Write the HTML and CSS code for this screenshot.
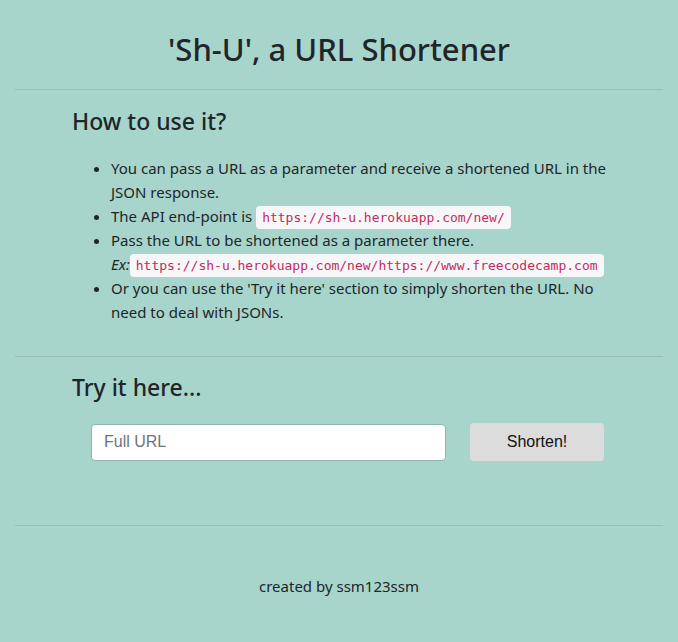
FILE: index.html
```html
<!DOCTYPE html>
<html lang="en">
<head>
<meta charset="utf-8">
<title>Sh-U</title>
<link rel="stylesheet" href="styles.css">
</head>
<body>
<div class="page">
  <header class="header">
    <h1 class="title">'Sh-U', a URL Shortener</h1>
  </header>
  <hr class="rule">
  <section class="section how">
    <h3 class="heading">How to use it?</h3>
    <ul class="steps">
      <li>You can pass a URL as a parameter and receive a shortened URL in the JSON response.</li>
      <li>The API end-point is <code class="code">https://sh-u.herokuapp.com/new/</code></li>
      <li>Pass the URL to be shortened as a parameter there.<br><em>Ex:</em><code class="code">https://sh-u.herokuapp.com/new/https://www.freecodecamp.com</code></li>
      <li>Or you can use the 'Try it here' section to simply shorten the URL. No need to deal with JSONs.</li>
    </ul>
  </section>
  <hr class="rule">
  <section class="section try">
    <h3 class="heading">Try it here...</h3>
    <form class="form">
      <input class="url-input" type="text" placeholder="Full URL">
      <button class="btn" type="button">Shorten!</button>
    </form>
  </section>
  <hr class="rule">
  <footer class="footer">created by ssm123ssm</footer>
</div>
</body>
</html>
```
FILE: styles.css
```css
html, body {
  margin: 0;
  padding: 0;
}
body {
  background: #a7d5cc;
  color: #212529;
  font-family: "Noto Sans", sans-serif;
  font-size: 15px;
  line-height: 24px;
}
.page {
  padding: 0 15px;
}
.header {
  padding-top: 30px;
  padding-bottom: 21px;
  text-align: center;
}
.title {
  margin: 0;
  font-size: 31px;
  font-weight: 500;
  line-height: 38px;
}
.rule {
  margin: 0;
  border: 0;
  border-top: 1px solid rgba(0, 0, 0, 0.1);
}
.section {
  padding: 0 42px 0 57px;
}
.how {
  padding-top: 17px;
  padding-bottom: 32px;
}
.heading {
  margin: 0;
  font-size: 23px;
  font-weight: 500;
  line-height: 29px;
}
.steps {
  margin: 20px 0 0 0;
  padding-left: 39px;
}
.code {
  font-family: "DejaVu Sans Mono", monospace;
  font-size: 13px;
  line-height: 1;
  color: #c42a5c;
  background: #f7f7f9;
  border-radius: 4px;
  padding: 4px 6px;
}
.try {
  padding-top: 16px;
  padding-bottom: 64px;
}
.form {
  display: flex;
  align-items: center;
  gap: 24px;
  margin: 21px 0 0 0;
  padding: 0 17px 0 19px;
}
.url-input {
  flex: 1;
  height: 37px;
  box-sizing: border-box;
  border: 1px solid #8fb5ad;
  border-radius: 4px;
  padding: 0 12px;
  font-family: "Liberation Sans", Arial, sans-serif;
  font-size: 16px;
  color: #495057;
  background: #fff;
}
.url-input::placeholder {
  color: #6c757d;
}
.btn {
  width: 134px;
  height: 38px;
  border: 0;
  border-radius: 4px;
  background: #dcdcdc;
  font-family: "Liberation Sans", Arial, sans-serif;
  font-size: 16px;
  color: #111;
}
.footer {
  padding-top: 48px;
  text-align: center;
}
```
